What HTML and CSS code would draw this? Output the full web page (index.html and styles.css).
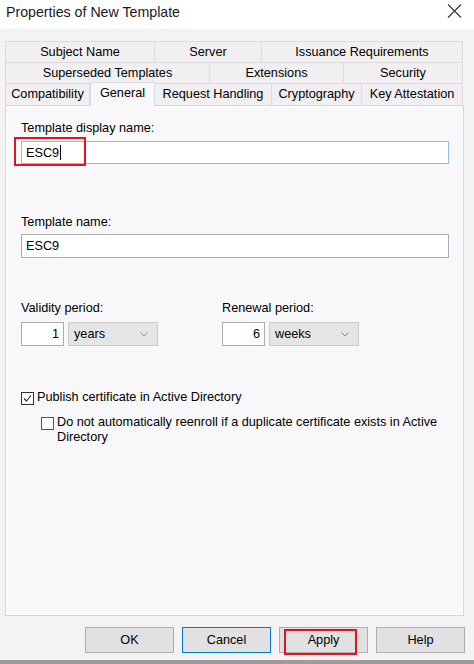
FILE: index.html
```html
<!DOCTYPE html>
<html>
<head>
<meta charset="utf-8">
<link rel="stylesheet" href="styles.css">
</head>
<body>
<div class="window">
  <div class="titlebar">
    <span class="title">Properties of New Template</span>
    <svg class="close" width="15" height="14" viewBox="0 0 15 14"><path d="M1 0.5 L14 13.5 M14 0.5 L1 13.5" stroke="#333" stroke-width="1.1" fill="none"/></svg>
  </div>
  <div class="content">
    <div class="tabs">
      <div class="tabrow">
        <div class="tab w150">Subject Name</div>
        <div class="tab w107">Server</div>
        <div class="tab w201">Issuance Requirements</div>
      </div>
      <div class="tabrow">
        <div class="tab w205">Superseded Templates</div>
        <div class="tab w134">Extensions</div>
        <div class="tab w119">Security</div>
      </div>
      <div class="tabrow last">
        <div class="tab w85">Compatibility</div>
        <div class="tab w65 selected">General</div>
        <div class="tab w117">Request Handling</div>
        <div class="tab w90">Cryptography</div>
        <div class="tab w101">Key Attestation</div>
      </div>
    </div>
    <div class="panel">
      <div class="field first">
        <div class="label">Template display name:</div>
        <div class="textbox focused"><span>ESC9</span><span class="caret"></span></div>
        <div class="highlight hl-name"></div>
      </div>
      <div class="field second">
        <div class="label">Template name:</div>
        <div class="textbox"><span>ESC9</span></div>
      </div>
      <div class="periods">
        <div class="period">
          <div class="label">Validity period:</div>
          <div class="period-controls">
            <div class="numbox">1</div>
            <div class="dropdown"><span>years</span><svg width="8" height="5" viewBox="0 0 8 5"><path d="M0.5 0.5 L4 4 L7.5 0.5" stroke="#8a8a8a" stroke-width="1" fill="none"/></svg></div>
          </div>
        </div>
        <div class="period">
          <div class="label">Renewal period:</div>
          <div class="period-controls">
            <div class="numbox">6</div>
            <div class="dropdown"><span>weeks</span><svg width="8" height="5" viewBox="0 0 8 5"><path d="M0.5 0.5 L4 4 L7.5 0.5" stroke="#8a8a8a" stroke-width="1" fill="none"/></svg></div>
          </div>
        </div>
      </div>
      <div class="check-row">
        <span class="checkbox checked"><svg width="11" height="11" viewBox="0 0 11 11"><path d="M2 5.5 L4.5 8 L9 2.5" stroke="#222" stroke-width="1.1" fill="none"/></svg></span>
        <span class="check-text">Publish certificate in Active Directory</span>
      </div>
      <div class="check-row sub">
        <span class="checkbox"></span>
        <span class="check-text wrap">Do not automatically reenroll if a duplicate certificate exists in Active Directory</span>
      </div>
    </div>
    <div class="buttons">
      <div class="btn">OK</div>
      <div class="btn default">Cancel</div>
      <div class="btn apply">Apply<div class="highlight hl-apply"></div></div>
      <div class="btn">Help</div>
    </div>
  </div>
  <div class="strip"></div>
</div>
</body>
</html>
```

FILE: styles.css
```css
* { box-sizing: border-box; }
html, body { margin: 0; padding: 0; }
body {
  width: 474px;
  height: 664px;
  overflow: hidden;
  font-family: "Liberation Sans", Arial, sans-serif;
  font-size: 13px;
  color: #000;
  background: #f4f2f4;
}
.window {
  width: 474px;
  height: 664px;
  display: flex;
  flex-direction: column;
}
.titlebar {
  height: 29px;
  background: #fff;
  display: flex;
  align-items: flex-start;
  justify-content: space-between;
  padding: 4px 12px 0 6px;
}
.title {
  font-size: 14.2px;
  line-height: 16px;
  color: #1a1a1a;
}
.close { margin-top: 0px; }
.content {
  flex: 1;
  padding: 12px 9px 0 5px;
  display: flex;
  flex-direction: column;
}
.tabs {
  width: 458px;
  display: flex;
  flex-direction: column;
}
.tabrow {
  display: flex;
  height: 21px;
}
.tabrow.last {
  height: 22px;
}
.tab {
  border: 1px solid #dcdcdc;
  border-left: none;
  border-bottom: none;
  background: #f1eff1;
  text-align: center;
  line-height: 20px;
  font-size: 12.7px;
  white-space: nowrap;
}
.tab:first-child { border-left: 1px solid #dcdcdc; }
.tabrow.last .tab { line-height: 21px; }
.tab.selected {
  position: relative;
  z-index: 2;
  margin-top: -1px;
  height: 24px;
  background: #f8f7f9;
  border-left: 1px solid #dcdcdc;
  line-height: 18px;
}
.w150 { width: 150px; }
.w107 { width: 107px; }
.w201 { width: 201px; }
.w205 { width: 205px; }
.w134 { width: 134px; }
.w119 { width: 119px; }
.w85 { width: 85px; }
.w65 { width: 65px; }
.w117 { width: 117px; }
.w90 { width: 90px; }
.w101 { width: 101px; }
.panel {
  position: relative;
  width: 459px;
  height: 511px;
  border: 1px solid #d6d6d6;
  background: #f8f7f9;
  box-shadow: inset 1px 1px 0 #fff, inset -1px -1px 0 #fff;
  padding: 15px 14px 0 15px;
  display: flex;
  flex-direction: column;
}
.label {
  font-size: 12.7px;
  line-height: 15px;
}
.field { position: relative; }
.field.first .label { margin-bottom: 5px; }
.field.second { margin-top: 51px; }
.field.second .label { margin-bottom: 4px; }
.textbox {
  width: 428px;
  height: 24px;
  background: #fff;
  border: 1px solid #adadad;
  padding: 0 4px;
  display: flex;
  align-items: center;
  font-size: 12.7px;
}
.textbox.focused { border-color: #8fbfe8; height: 23px; }
.caret {
  display: inline-block;
  width: 1px;
  height: 15px;
  background: #000;
  margin-left: 1px;
}
.highlight {
  position: absolute;
  border: 2px solid #e3141f;
  pointer-events: none;
}
.hl-name {
  left: -7px;
  top: 16px;
  width: 72px;
  height: 29px;
}
.periods {
  display: flex;
  margin-top: 43px;
}
.period { width: 201px; }
.period .label { margin-bottom: 6px; }
.period-controls {
  display: flex;
  gap: 4px;
}
.numbox {
  width: 43px;
  height: 24px;
  background: #fff;
  border: 1px solid #adadad;
  text-align: right;
  padding-right: 4px;
  line-height: 22px;
  font-size: 12.7px;
}
.dropdown {
  width: 90px;
  height: 24px;
  background: #e5e5e5;
  border: 1px solid #cccccc;
  display: flex;
  align-items: center;
  justify-content: space-between;
  padding: 0 9px 0 5px;
  font-size: 12.7px;
}
.check-row {
  display: flex;
  align-items: flex-start;
  margin-top: 44px;
}
.check-row.sub {
  margin-top: 9px;
  padding-left: 20px;
}
.checkbox {
  width: 13px;
  height: 13px;
  border: 1px solid #333;
  background: #fff;
  margin-top: 2px;
  margin-right: 3px;
  display: flex;
  align-items: center;
  justify-content: center;
  flex: none;
}
.check-row.sub .checkbox { border-color: #555; }
.check-text {
  font-size: 12.7px;
  line-height: 15.5px;
}
.check-text.wrap { width: 392px; }
.buttons {
  display: flex;
  justify-content: flex-end;
  gap: 8px;
  margin-top: 11px;
  width: 460px;
}
.btn {
  position: relative;
  width: 89px;
  height: 26px;
  background: #e1e1e1;
  border: 1px solid #adadad;
  text-align: center;
  line-height: 24px;
  font-size: 12.7px;
}
.btn.default { border-color: #0078d7; }
.hl-apply {
  left: 4px;
  top: 1px;
  width: 73px;
  height: 26px;
}
.strip {
  height: 4px;
  margin-top: auto;
  background: #9c9c9c;
}
```
